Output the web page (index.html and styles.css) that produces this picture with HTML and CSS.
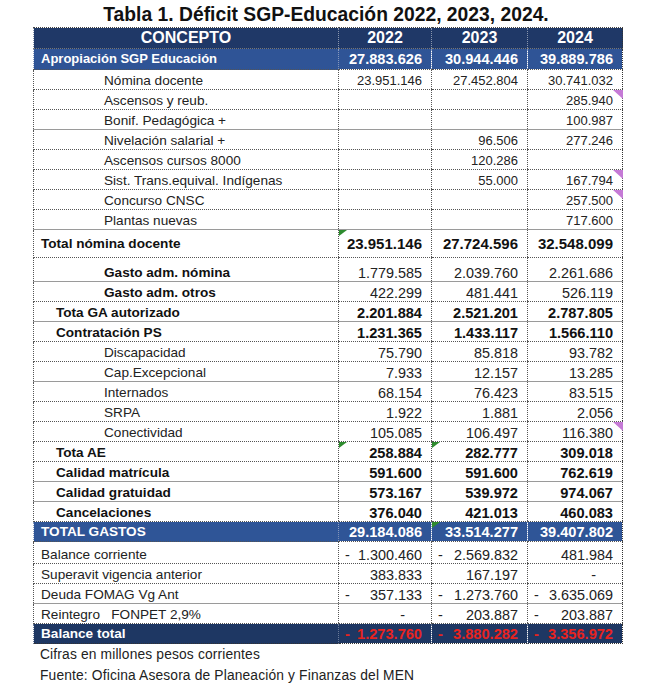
FILE: index.html
```
<!DOCTYPE html>
<html lang="es">
<head>
<meta charset="utf-8">
<title>Tabla 1. Déficit SGP-Educación</title>
<link rel="stylesheet" href="styles.css">
</head>
<body>
<div class="page">
  <h1 class="title">Tabla 1. Déficit SGP-Educación 2022, 2023, 2024.</h1>
  <table class="tbl">
    <colgroup><col class="c0"><col class="c1"><col class="c2"><col class="c3"></colgroup>
    <tr class="hdr">
      <th>CONCEPTO</th><th>2022</th><th>2023</th><th>2024</th>
    </tr>
    <tr class="approp dot">
      <td class="lbl l0">Apropiación SGP Educación</td><td class="n">27.883.626</td><td class="n">30.944.446</td><td class="n">39.889.786</td>
    </tr>
    <tr class="top dot">
      <td class="lbl l2">Nómina docente</td><td class="n">23.951.146</td><td class="n">27.452.804</td><td class="n">30.741.032</td>
    </tr>
    <tr class="top dot">
      <td class="lbl l2">Ascensos y reub.</td><td class="n"></td><td class="n"></td><td class="n cmt">285.940</td>
    </tr>
    <tr class="top sol">
      <td class="lbl l2">Bonif. Pedagógica +</td><td class="n"></td><td class="n"></td><td class="n">100.987</td>
    </tr>
    <tr class="top dot">
      <td class="lbl l2">Nivelación salarial +</td><td class="n"></td><td class="n">96.506</td><td class="n">277.246</td>
    </tr>
    <tr class="top dot">
      <td class="lbl l2">Ascensos cursos 8000</td><td class="n"></td><td class="n">120.286</td><td class="n"></td>
    </tr>
    <tr class="top dot">
      <td class="lbl l2">Sist. Trans.equival. Indígenas</td><td class="n"></td><td class="n">55.000</td><td class="n cmt">167.794</td>
    </tr>
    <tr class="top dot">
      <td class="lbl l2">Concurso CNSC</td><td class="n"></td><td class="n"></td><td class="n cmt">257.500</td>
    </tr>
    <tr class="top sol">
      <td class="lbl l2">Plantas nuevas</td><td class="n"></td><td class="n"></td><td class="n">717.600</td>
    </tr>
    <tr class="big b dot">
      <td class="lbl l0">Total nómina docente</td><td class="n err">23.951.146</td><td class="n">27.724.596</td><td class="n">32.548.099</td>
    </tr>
    <tr class="mid sol">
      <td class="lbl l2 bl">Gasto adm. nómina</td><td class="n">1.779.585</td><td class="n">2.039.760</td><td class="n">2.261.686</td>
    </tr>
    <tr class="dot">
      <td class="lbl l2 bl">Gasto adm. otros</td><td class="n">422.299</td><td class="n">481.441</td><td class="n">526.119</td>
    </tr>
    <tr class="b sol">
      <td class="lbl l1">Tota GA autorizado</td><td class="n">2.201.884</td><td class="n">2.521.201</td><td class="n">2.787.805</td>
    </tr>
    <tr class="b dot">
      <td class="lbl l1">Contratación PS</td><td class="n">1.231.365</td><td class="n">1.433.117</td><td class="n">1.566.110</td>
    </tr>
    <tr class="dot">
      <td class="lbl l2">Discapacidad</td><td class="n">75.790</td><td class="n">85.818</td><td class="n">93.782</td>
    </tr>
    <tr class="sol">
      <td class="lbl l2">Cap.Excepcional</td><td class="n">7.933</td><td class="n">12.157</td><td class="n">13.285</td>
    </tr>
    <tr class="dot">
      <td class="lbl l2">Internados</td><td class="n">68.154</td><td class="n">76.423</td><td class="n">83.515</td>
    </tr>
    <tr class="dot">
      <td class="lbl l2">SRPA</td><td class="n">1.922</td><td class="n">1.881</td><td class="n">2.056</td>
    </tr>
    <tr class="dot">
      <td class="lbl l2">Conectividad</td><td class="n">105.085</td><td class="n">106.497</td><td class="n cmt">116.380</td>
    </tr>
    <tr class="b dot">
      <td class="lbl l1">Tota AE</td><td class="n err">258.884</td><td class="n err">282.777</td><td class="n">309.018</td>
    </tr>
    <tr class="b sol">
      <td class="lbl l1">Calidad matrícula</td><td class="n">591.600</td><td class="n">591.600</td><td class="n">762.619</td>
    </tr>
    <tr class="b sol">
      <td class="lbl l1">Calidad gratuidad</td><td class="n">573.167</td><td class="n">539.972</td><td class="n">974.067</td>
    </tr>
    <tr class="b dot">
      <td class="lbl l1">Cancelaciones</td><td class="n">376.040</td><td class="n">421.013</td><td class="n">460.083</td>
    </tr>
    <tr class="tg dot">
      <td class="lbl l0">TOTAL GASTOS</td><td class="n">29.184.086</td><td class="n err">33.514.277</td><td class="n">39.407.802</td>
    </tr>
    <tr class="first dot">
      <td class="lbl l0">Balance corriente</td>
      <td class="n"><div class="acc"><span>-</span><span>1.300.460</span></div></td>
      <td class="n"><div class="acc"><span>-</span><span>2.569.832</span></div></td>
      <td class="n">481.984</td>
    </tr>
    <tr class="dot">
      <td class="lbl l0">Superavit vigencia anterior</td><td class="n">383.833</td><td class="n">167.197</td><td class="n zero">-</td>
    </tr>
    <tr class="sol">
      <td class="lbl l0">Deuda FOMAG Vg Ant</td>
      <td class="n"><div class="acc"><span>-</span><span>357.133</span></div></td>
      <td class="n"><div class="acc"><span>-</span><span>1.273.760</span></div></td>
      <td class="n"><div class="acc"><span>-</span><span>3.635.069</span></div></td>
    </tr>
    <tr class="dot">
      <td class="lbl l0">Reintegro&nbsp;&nbsp; FONPET 2,9%</td>
      <td class="n zero">-</td>
      <td class="n"><div class="acc"><span>-</span><span>203.887</span></div></td>
      <td class="n"><div class="acc"><span>-</span><span>203.887</span></div></td>
    </tr>
    <tr class="bt">
      <td class="lbl l0">Balance total</td>
      <td class="n"><div class="acc"><span>-</span><span>1.273.760</span></div></td>
      <td class="n"><div class="acc"><span>-</span><span>3.880.282</span></div></td>
      <td class="n"><div class="acc"><span>-</span><span>3.356.972</span></div></td>
    </tr>
  </table>
  <p class="note">Cifras en millones pesos corrientes</p>
  <p class="note">Fuente: Oficina Asesora de Planeación y Finanzas del MEN</p>
</div>
</body>
</html>
```
FILE: styles.css
```
* { box-sizing: border-box; }
html, body { margin: 0; padding: 0; background: #fff; }
body {
  font-family: "Liberation Sans", Arial, sans-serif;
  color: #222;
}
.page { width: 650px; padding-top: 4px; }
.title {
  margin: 0 0 1px 0;
  font-size: 19.3px;
  line-height: 22px;
  font-weight: bold;
  color: #111;
  text-align: center;
  padding-left: 2px;
}
.tbl {
  margin-left: 33px;
  width: 589px;
  table-layout: fixed;
  border-collapse: collapse;
  border-left: 1px dotted #333;
  border-right: 1px dotted #333;
  border-bottom: 1px dotted #333;
}
.c0 { width: 305px; }
.c1 { width: 93px; }
.c2 { width: 96px; }
.c3 { width: 95px; }

.tbl td, .tbl th {
  padding: 0 9px 0 0;
  height: 20px;
  vertical-align: bottom;
  white-space: nowrap;
  border-left: 1px dotted #555;
  line-height: 16px;
  overflow: visible;
}
.tbl tr.dot td { border-bottom: 1px dotted #555; }
.tbl tr.sol td { border-bottom: 1px solid #9a9a9a; }

.lbl { font-size: 13.6px; text-align: left; }
.l0 { padding-left: 7px !important; }
.l1 { padding-left: 22px !important; }
.l2 { padding-left: 70px !important; }
.bl { font-weight: bold; color: #111; }

.n { text-align: right; font-size: 14.4px; position: relative; }
.top .n { font-size: 13px; }

.b td { font-weight: bold; color: #111; }
.b .n { font-size: 14.6px; }

/* header */
.hdr th {
  background: #1f3867;
  color: #fff;
  font-size: 16px;
  font-weight: bold;
  text-align: center;
  height: 21px;
  padding: 0;
  vertical-align: middle;
  border-top: 1px dotted #444;
  border-bottom: 1px dotted #777;
  border-left: 1px dotted #8a96ad;
}
.approp td {
  background: #2f5496;
  color: #fff;
  font-weight: bold;
  height: 21px;
  vertical-align: middle;
  border-left-color: #8a9cc0;
}
.approp .lbl { font-size: 13px; }
.approp .n { font-size: 14.6px; }

.big td { height: 28px; vertical-align: middle; }
.big .n { font-size: 15px; }
.mid td { height: 24px; }

.tg td {
  background: #2f5597;
  color: #fff;
  font-weight: bold;
  height: 20px;
  vertical-align: middle;
  border-left-color: #8a9cc0;
}
.tg .lbl { font-size: 13.6px; }
.tg .n { font-size: 14.6px; }
.first td { height: 22px; }

.bt td {
  background: #1e3763;
  color: #fff;
  font-weight: bold;
  height: 20px;
  vertical-align: middle;
  border-left-color: #6a7a98;
}
.bt .n { color: #e8231f; font-size: 14.6px; }

.acc { display: flex; justify-content: space-between; padding-left: 6px; }
.zero { padding-right: 26px !important; }

/* excel indicators */
.cmt::after {
  content: "";
  position: absolute;
  top: 0;
  right: -1px;
  width: 0;
  height: 0;
  border-top: 9px solid #c57ad6;
  border-left: 10px solid transparent;
}
.err::before {
  content: "";
  position: absolute;
  top: 0;
  left: 0;
  width: 0;
  height: 0;
  border-top: 6px solid #2e8b2e;
  border-right: 8px solid transparent;
}

.note {
  margin: 0;
  padding-left: 40px;
  font-size: 13.8px;
  line-height: 21px;
  color: #222;
  letter-spacing: 0.15px;
}
```
